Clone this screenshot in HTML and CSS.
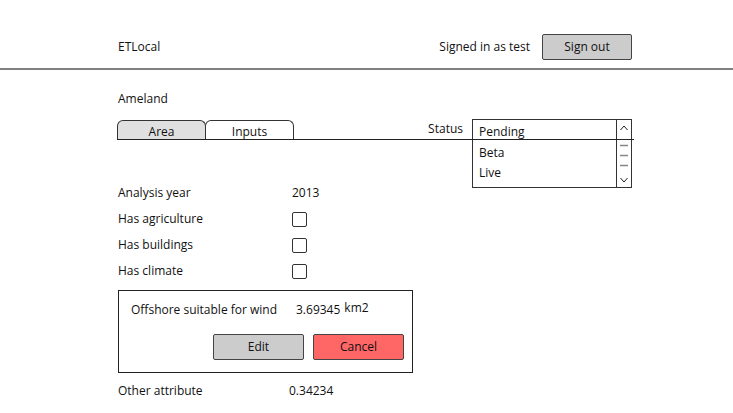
FILE: index.html
```html
<!DOCTYPE html>
<html>
<head>
<meta charset="utf-8">
<link rel="stylesheet" href="styles.css">
</head>
<body>
<header class="topbar">
  <div class="topbar-inner">
    <span class="brand">ETLocal</span>
    <div class="user">
      <span>Signed in as test</span>
      <button class="btn btn-gray signout">Sign out</button>
    </div>
  </div>
</header>
<main class="main">
  <div class="area-name">Ameland</div>
  <div class="tabrow">
    <div class="tabs">
      <div class="tab tab-active">Area</div>
      <div class="tab">Inputs</div>
    </div>
    <div class="status">
      <span class="status-label">Status</span>
      <div class="listbox">
        <ul class="options">
          <li class="opt">Pending</li>
          <li class="opt">Beta</li>
          <li class="opt">Live</li>
        </ul>
        <div class="scrollbar">
          <svg width="14" height="67" viewBox="0 0 14 67">
            <path d="M3.5 10 L7 6 L10.5 10" fill="none" stroke="#222" stroke-width="1"/>
            <path d="M3 25.5 H11 M3 35.5 H11 M3 45.5 H11" stroke="#888" stroke-width="1.5"/>
            <path d="M3.5 58 L7 62 L10.5 58" fill="none" stroke="#222" stroke-width="1"/>
          </svg>
        </div>
      </div>
    </div>
  </div>
  <div class="fields">
    <div class="label">Analysis year</div><div class="value">2013</div>
    <div class="label">Has agriculture</div><div class="value"><span class="check"></span></div>
    <div class="label">Has buildings</div><div class="value"><span class="check"></span></div>
    <div class="label">Has climate</div><div class="value"><span class="check"></span></div>
  </div>
  <section class="editbox">
    <div class="editline">
      <span class="edit-label">Offshore suitable for wind</span>
      <span class="edit-value">3.69345</span>
      <span class="unit">km2</span>
    </div>
    <div class="actions">
      <button class="btn btn-gray action">Edit</button>
      <button class="btn btn-red action">Cancel</button>
    </div>
  </section>
  <div class="fields other">
    <div class="label">Other attribute</div><div class="value value-other">0.34234</div>
  </div>
</main>
</body>
</html>
```

FILE: styles.css
```css
* { box-sizing: border-box; }
body {
  margin: 0;
  background: #fff;
  color: #111;
  font-family: "Open Sans", "DejaVu Sans", sans-serif;
  font-size: 12px;
  line-height: 14px;
}
.topbar {
  padding-top: 34px;
  padding-bottom: 8px;
  border-bottom: 2px solid #808080;
}
.topbar-inner {
  margin-left: 118px;
  width: 514px;
  display: flex;
  align-items: center;
  justify-content: space-between;
}
.user {
  display: flex;
  align-items: center;
  gap: 12px;
}
.btn {
  font: inherit;
  color: #111;
  border: 1px solid #444;
  border-radius: 2px;
  padding: 0;
  cursor: pointer;
}
.btn-gray { background: #cccccc; }
.btn-red { background: #ff6666; }
.signout { width: 90px; height: 26px; }
.main {
  margin-left: 118px;
  width: 516px;
}
.area-name {
  padding-top: 22px;
  height: 49px;
}
.tabrow {
  position: relative;
  display: flex;
  justify-content: space-between;
  align-items: flex-start;
  margin-left: -1px;
  height: 61px;
}
.tabrow::after {
  content: "";
  position: absolute;
  left: 0;
  right: 0;
  top: 20px;
  height: 1px;
  background: #222;
}
.tabs {
  display: flex;
  padding-top: 1px;
}
.tab {
  width: 89px;
  height: 20px;
  border: 1px solid #333;
  border-bottom: none;
  border-radius: 6px 6px 0 0;
  text-align: center;
  line-height: 22px;
  background: #fff;
}
.tab + .tab { margin-left: -1px; }
.tab-active { background: #e0e0e0; }
.status {
  display: flex;
  align-items: flex-start;
  gap: 9px;
  margin-right: 2px;
}
.status-label { padding-top: 3px; }
.listbox {
  width: 160px;
  height: 69px;
  border: 1px solid #333;
  display: flex;
  background: #fff;
  position: relative;
}
.options {
  list-style: none;
  margin: 0;
  padding: 0;
  flex: 1;
}
.opt {
  height: 20px;
  line-height: 23px;
  padding-left: 6px;
  color: #111;
}
.opt:nth-child(2) { margin-top: 1px; }
.scrollbar {
  width: 15px;
  border-left: 1px solid #333;
}
.scrollbar svg { display: block; }
.fields {
  display: grid;
  grid-template-columns: 174px auto;
  grid-auto-rows: 26px;
  align-items: center;
}
.value { display: flex; align-items: center; }
.fields .value:first-of-type { padding-left: 3px; }
.check {
  display: inline-block;
  width: 15px;
  height: 15px;
  border: 1px solid #333;
  border-radius: 2px;
}
.editbox {
  margin-top: 6px;
  width: 295px;
  height: 83px;
  border: 1px solid #222;
  padding: 12px 8px 0 12px;
}
.editline {
  display: flex;
  align-items: baseline;
}
.edit-label { width: 165px; }
.unit { margin-left: 4px; position: relative; top: -2px; }
.actions {
  display: flex;
  justify-content: flex-end;
  gap: 9px;
  margin-top: 17px;
}
.action { width: 91px; height: 26px; }
.other {
  padding-top: 5px;
  grid-template-columns: 171px auto;
}
.other .value-other { padding-left: 0; }
```
